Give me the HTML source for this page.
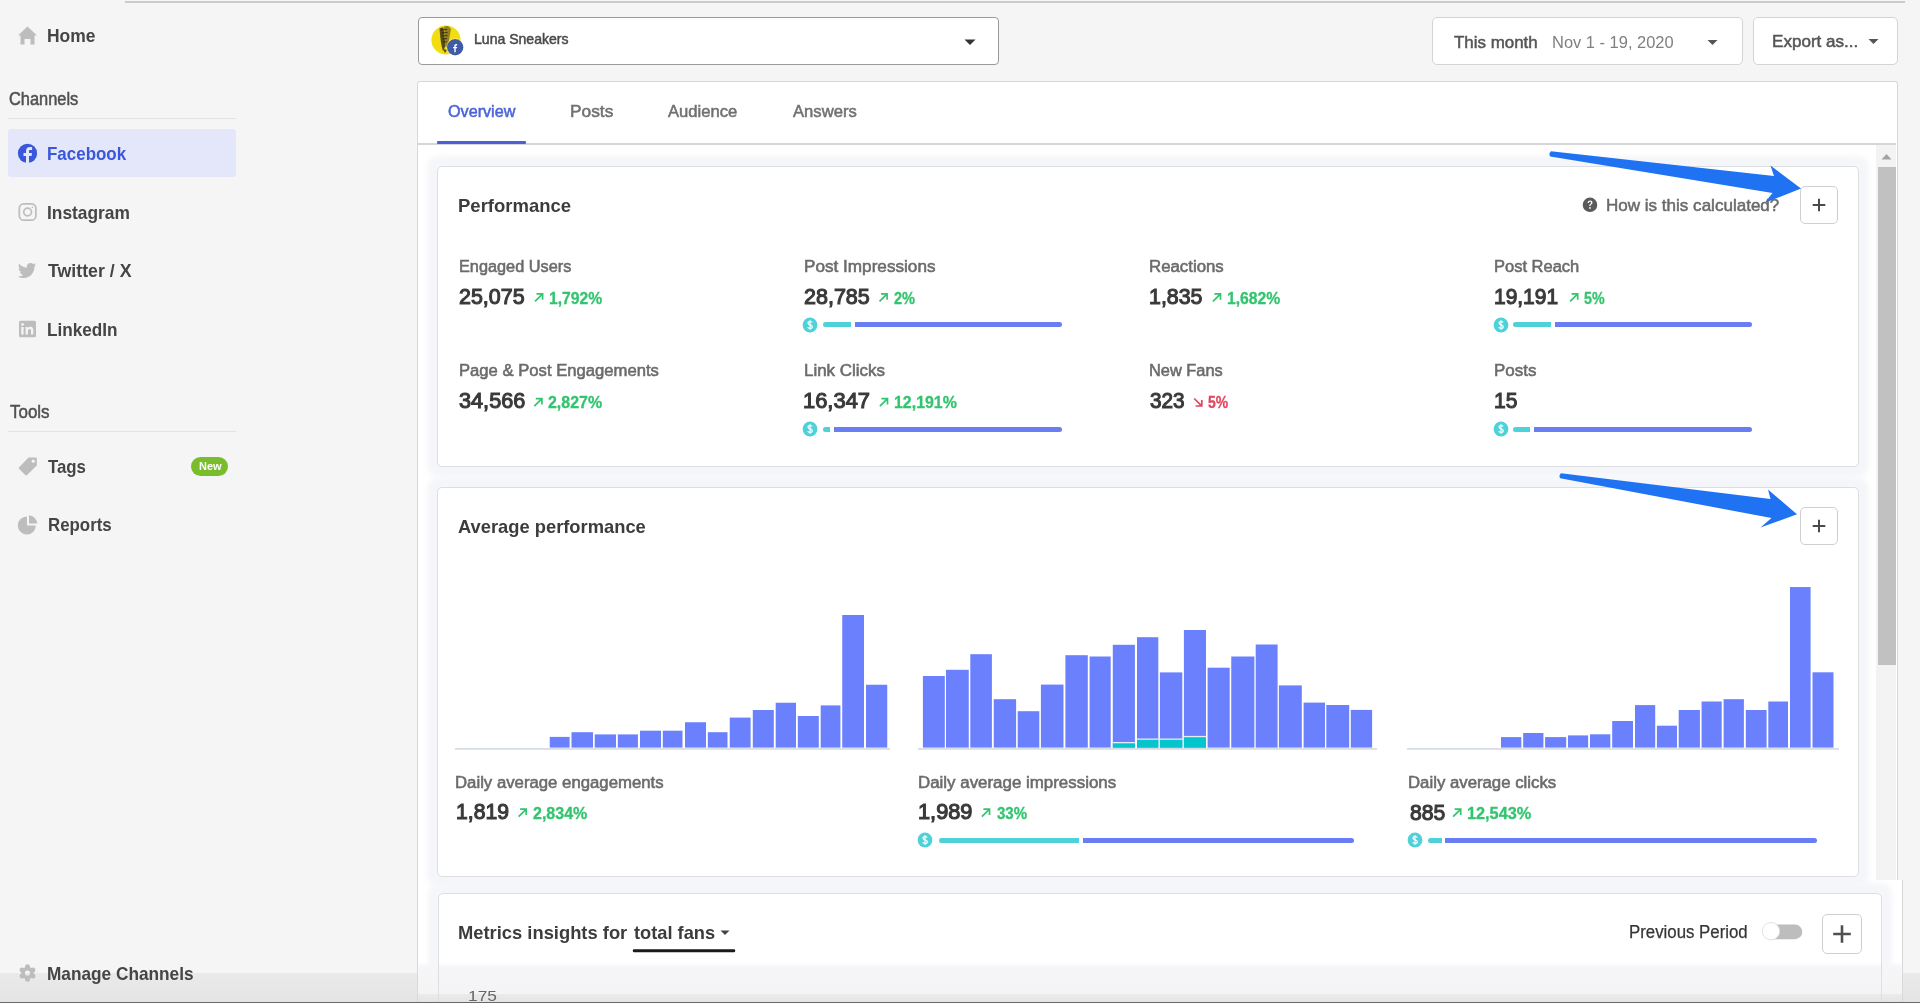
<!DOCTYPE html>
<html><head><meta charset="utf-8"><style>
*{margin:0;padding:0;box-sizing:border-box}
html,body{width:1920px;height:1003px;overflow:hidden;background:#f5f5f5;font-family:"Liberation Sans", sans-serif}
.t{position:absolute;white-space:nowrap;line-height:1;transform-origin:0 0}
.a{position:absolute}
</style></head><body>
<div style="position:absolute;left:0;top:0;width:1920px;height:1003px;filter:blur(0.45px)"><div class="a" style="left:0;top:972.7px;width:1920px;height:30px;background:linear-gradient(to bottom,#eaeaea,#e4e4e4)"></div>
<div class="a" style="left:125px;top:1px;width:1780px;height:2px;background:#cbcbcb"></div>
<div class="a" style="left:8px;top:118px;width:228px;height:1px;background:#e2e2e2"></div>
<div class="a" style="left:8px;top:431px;width:228px;height:1px;background:#e2e2e2"></div>
<div class="a" style="left:8px;top:129px;width:228px;height:48px;background:#e4e7f9;border-radius:3px"></div>
<div class="a" style="left:191px;top:457px;width:37px;height:19px;background:#79bd2c;border-radius:10px"></div>
<svg class="a" style="left:0;top:0" width="240" height="1003" viewBox="0 0 240 1003">
 <path d="M27.5 26.5 L37 35.5 L34.5 35.5 L34.5 44.5 L30.5 44.5 L30.5 39 L24.5 39 L24.5 44.5 L20.5 44.5 L20.5 35.5 L18 35.5 Z" fill="#bdbdbd"/>
 <circle cx="27.5" cy="153.4" r="9.6" fill="#3a56da"/>
 <path d="M29 163 L29 156 L31.6 156 L32 153 L29 153 L29 151.3 C29 150.4 29.3 149.9 30.5 149.9 L32.1 149.9 L32.1 147.2 C31.6 147.1 30.8 147 29.9 147 C27.6 147 26 148.4 26 151 L26 153 L23.5 153 L23.5 156 L26 156 L26 163 Z" fill="#e4e7f9"/>
 <rect x="19.3" y="203.8" width="16.6" height="16.4" rx="4.5" fill="none" stroke="#bdbdbd" stroke-width="1.7"/>
 <circle cx="27.6" cy="212" r="3.9" fill="none" stroke="#bdbdbd" stroke-width="1.7"/>
 <circle cx="32.4" cy="207.3" r="0.9" fill="#bdbdbd"/>
 <path transform="translate(0,1.6)" d="M36.2 263.2 C35.5 263.5 34.8 263.7 34.1 263.8 C34.9 263.3 35.5 262.6 35.7 261.7 C35 262.1 34.2 262.4 33.4 262.6 C32.7 261.8 31.7 261.4 30.6 261.4 C28.5 261.4 26.8 263.1 26.8 265.2 C26.8 265.5 26.8 265.8 26.9 266.1 C23.8 265.9 21 264.4 19.1 262.1 C18.8 262.7 18.6 263.3 18.6 264 C18.6 265.3 19.3 266.5 20.3 267.2 C19.7 267.2 19.1 267 18.6 266.7 C18.6 268.6 19.9 270.1 21.7 270.5 C21.1 270.7 20.4 270.7 19.9 270.6 C20.4 272.1 21.8 273.2 23.4 273.2 C22.1 274.2 20.5 274.8 18.7 274.8 C18.4 274.8 18.1 274.8 17.8 274.8 C19.5 275.9 21.5 276.5 23.6 276.5 C30.6 276.5 34.4 270.7 34.4 265.7 L34.4 265.2 C35.1 264.6 35.7 264 36.2 263.2 Z" fill="#bdbdbd"/>
 <rect x="19" y="320.8" width="17" height="16.4" rx="1.5" fill="#bdbdbd"/>
 <rect x="21.3" y="327" width="2.3" height="7.6" fill="#f5f5f5"/>
 <circle cx="22.45" cy="324.4" r="1.35" fill="#f5f5f5"/>
 <path d="M25.6 327 L27.8 327 L27.8 328.2 C28.3 327.4 29.1 326.8 30.4 326.8 C32.6 326.8 33.3 328.1 33.3 330.2 L33.3 334.6 L31 334.6 L31 330.8 C31 329.7 30.8 328.9 29.7 328.9 C28.5 328.9 27.9 329.6 27.9 330.9 L27.9 334.6 L25.6 334.6 Z" fill="#f5f5f5"/>
 <path d="M28.5 457.5 L35.8 457.5 C36.4 457.5 36.8 457.9 36.8 458.5 L36.8 465.5 L27 475 C26.5 475.5 25.8 475.5 25.3 475 L19.2 469 C18.7 468.5 18.7 467.8 19.2 467.3 Z" fill="#bdbdbd"/>
 <circle cx="33.2" cy="461.2" r="1.6" fill="#f5f5f5"/>
 <path d="M27 516.5 L27 525.5 L35.8 525.5 A9 9 0 1 1 27 516.5 Z" fill="#bdbdbd"/>
 <path d="M29 515.3 A9 9 0 0 1 37.3 523.6 L29 523.6 Z" fill="#bdbdbd"/>
 <mask id="gm"><rect x="-12" y="-12" width="24" height="24" fill="black"/><circle cx="0" cy="0" r="6.2" fill="white"/><circle cx="0.00" cy="-6.20" r="2.5" fill="white"/><circle cx="5.37" cy="-3.10" r="2.5" fill="white"/><circle cx="5.37" cy="3.10" r="2.5" fill="white"/><circle cx="0.00" cy="6.20" r="2.5" fill="white"/><circle cx="-5.37" cy="3.10" r="2.5" fill="white"/><circle cx="-5.37" cy="-3.10" r="2.5" fill="white"/><circle cx="0" cy="0" r="2.6" fill="black"/></mask>
 <g transform="translate(27.5,973)"><rect x="-12" y="-12" width="24" height="24" fill="#bdbdbd" mask="url(#gm)"/></g>
</svg>
<div class="a" style="left:418px;top:17px;width:581px;height:48px;background:#fff;border:1.5px solid #9a9a9a;border-radius:4px"></div>
<svg class="a" style="left:428px;top:22px" width="40" height="40" viewBox="0 0 40 40">
 <circle cx="18" cy="18" r="14.6" fill="#f2de10"/>
 <path d="M11.5 6.5 Q13.5 5 15.5 5.5 L17.5 24 L15 29 Q12.5 22 11.5 6.5 Z" fill="#3d3520" opacity="0.85"/>
 <path d="M16 4.5 L20 4 L23 7 L19.5 26 L17.5 24 Z" fill="#8a7420" opacity="0.9"/>
 <path d="M13 8 L19 7.5 M13.5 11 L19.5 10.5 M14 14 L19.5 13.5 M14.5 17 L19 16.5 M15 20 L18.5 19.8" stroke="#1e1a10" stroke-width="1.1" opacity="0.75"/>
 <path d="M15 27 L17 31 L19 28 Z" fill="#2a2a20" opacity="0.8"/>
 <circle cx="27.2" cy="25.2" r="8.2" fill="#3f5aa6"/>
 <circle cx="27.2" cy="25.2" r="8.6" fill="none" stroke="#fff" stroke-width="0.6" opacity="0.6"/>
 <path d="M27.7 30.2 L27.7 26.3 L29 26.3 L29.2 24.9 L27.7 24.9 L27.7 24 C27.7 23.6 27.9 23.4 28.4 23.4 L29.2 23.4 L29.2 22.1 C29 22.1 28.6 22 28.1 22 C27 22 26.3 22.7 26.3 23.9 L26.3 24.9 L25.1 24.9 L25.1 26.3 L26.3 26.3 L26.3 30.2 Z" fill="#fff"/>
</svg>
<svg class="a" style="left:963px;top:38px" width="14" height="8"><path d="M1.5 1.5 L12.5 1.5 L7 7 Z" fill="#333"/></svg>
<div class="a" style="left:1432px;top:17px;width:311px;height:48px;background:#fff;border:1.5px solid #d3d3d3;border-radius:5px"></div>
<svg class="a" style="left:1706px;top:39px" width="14" height="8"><path d="M1.5 1 L11.5 1 L6.5 6 Z" fill="#555"/></svg>
<div class="a" style="left:1753px;top:17px;width:145px;height:48px;background:#fff;border:1.5px solid #d3d3d3;border-radius:5px"></div>
<svg class="a" style="left:1867px;top:38px" width="14" height="8"><path d="M1.5 1 L11.5 1 L6.5 6 Z" fill="#555"/></svg>
<div class="a" style="left:416.5px;top:80.5px;width:1481px;height:800px;background:#fff;border:1.5px solid #d8d8d8;border-bottom:none;border-radius:3px 3px 0 0"></div>
<div class="a" style="left:417px;top:880px;width:1486px;height:130px;background:#fff;border-left:1.5px solid #d8d8d8;border-right:1.5px solid #d8d8d8"></div>
<div class="a" style="left:418px;top:143.3px;width:1478px;height:1.6px;background:#d6d6d6"></div>
<div class="a" style="left:437px;top:140.5px;width:89px;height:3.3px;background:#4a5fd9;border-radius:1px"></div>
<div class="a" style="left:1876px;top:145px;width:20px;height:735px;background:#f3f3f3"></div>
<svg class="a" style="left:1876px;top:150px" width="20" height="14"><path d="M5.5 9.5 L10.5 4 L15.5 9.5 Z" fill="#a3a3a3"/></svg>
<div class="a" style="left:1877.5px;top:166.7px;width:18px;height:498.3px;background:#c1c1c1"></div>
<div class="a" style="left:427.3px;top:155.5px;width:1441.7px;height:321.0px;background:#f5f6f9;border-radius:12px;filter:blur(2.5px)"></div>
<div class="a" style="left:437.3px;top:165.5px;width:1421.7px;height:301.0px;background:#fff;border:1.4px solid #dcdee2;border-radius:5px"></div>
<div class="a" style="left:427.3px;top:477px;width:1441.7px;height:410px;background:#f5f6f9;border-radius:12px;filter:blur(2.5px)"></div>
<div class="a" style="left:437.3px;top:487px;width:1421.7px;height:390px;background:#fff;border:1.4px solid #dcdee2;border-radius:5px"></div>
<div class="a" style="left:427.5px;top:883px;width:1464.5px;height:167px;background:#f5f6f9;border-radius:12px;filter:blur(2.5px)"></div>
<div class="a" style="left:437.5px;top:893px;width:1444.5px;height:147px;background:#fff;border:1.4px solid #dcdee2;border-radius:5px"></div>
<div class="a" style="left:417px;top:962px;width:1486px;height:31.5px;background:linear-gradient(to bottom,rgba(246,246,248,0) 0px,#f6f6f8 5px,#f4f4f5 100%)"></div>
<div class="a" style="left:417px;top:993.5px;width:1486px;height:9px;background:linear-gradient(to bottom,#ebebeb,#e3e3e3)"></div>
<div class="a" style="left:416.5px;top:955px;width:1.5px;height:48px;background:#d8d8d8"></div>
<div class="a" style="left:437.5px;top:955px;width:1.4px;height:48px;background:#dcdee2"></div>
<div class="a" style="left:1880.6px;top:955px;width:1.4px;height:48px;background:#dcdee2"></div>
<div class="a" style="left:1901.5px;top:955px;width:1.5px;height:48px;background:#d8d8d8"></div>
<svg class="a" style="left:1580px;top:195px" width="20" height="20"><circle cx="10" cy="9.8" r="7.3" fill="#5a5a5a"/>
 <path d="M7.6 7.9 C7.6 6.4 8.6 5.5 10.1 5.5 C11.5 5.5 12.5 6.4 12.5 7.6 C12.5 8.6 11.9 9.1 11.2 9.6 C10.7 10 10.6 10.3 10.6 11 L9.3 11 C9.3 10 9.5 9.5 10.2 9 C10.8 8.5 11.1 8.2 11.1 7.6 C11.1 7.1 10.7 6.7 10.1 6.7 C9.4 6.7 9 7.2 9 7.9 Z" fill="#fff"/>
 <circle cx="9.95" cy="12.9" r="0.9" fill="#fff"/></svg>
<div class="a" style="left:1800.3px;top:185.8px;width:37.700000000000045px;height:38.69999999999999px;background:#fff;border:1.2px solid #cfcfcf;border-radius:5px"></div>
<svg class="a" style="left:1804.15px;top:190.15px" width="30" height="30"><path d="M8.7 15 L21.3 15 M15 8.7 L15 21.3" stroke="#4a4a4a" stroke-width="2"/></svg>
<div class="a" style="left:1800.3px;top:507.3px;width:37.700000000000045px;height:38.19999999999999px;background:#fff;border:1.2px solid #cfcfcf;border-radius:5px"></div>
<svg class="a" style="left:1804.15px;top:511.4px" width="30" height="30"><path d="M8.7 15 L21.3 15 M15 8.7 L15 21.3" stroke="#4a4a4a" stroke-width="2"/></svg>
<div class="a" style="left:1821.6px;top:913.5px;width:40.40000000000009px;height:40.0px;background:#fff;border:1.2px solid #cfcfcf;border-radius:5px"></div>
<svg class="a" style="left:1826.8px;top:918.5px" width="30" height="30"><path d="M6.199999999999999 15 L23.8 15 M15 6.199999999999999 L15 23.8" stroke="#505050" stroke-width="2.6"/></svg>
<svg class="a" style="left:801.3px;top:315.6px" width="18" height="18"><circle cx="9" cy="9" r="7.4" fill="#4fd1d9"/>
<path d="M11.2 6.6 C10.9 5.9 10.2 5.5 9.1 5.5 C7.8 5.5 7 6.2 7 7.1 C7 9.4 11.3 8.3 11.3 10.7 C11.3 11.7 10.4 12.5 9 12.5 C7.8 12.5 7 12 6.7 11.1 M9 4.2 L9 13.8" stroke="#fff" stroke-width="1.2" fill="none"/></svg>
<div class="a" style="left:822.7px;top:322.0px;width:28.399999999999977px;height:5.2px;background:#4fd1d9;border-radius:2.6px 0 0 2.6px"></div>
<div class="a" style="left:854.8px;top:322.0px;width:207.20000000000005px;height:5.2px;background:#6a7ef4;border-radius:0 2.6px 2.6px 0"></div>
<svg class="a" style="left:1492px;top:315.6px" width="18" height="18"><circle cx="9" cy="9" r="7.4" fill="#4fd1d9"/>
<path d="M11.2 6.6 C10.9 5.9 10.2 5.5 9.1 5.5 C7.8 5.5 7 6.2 7 7.1 C7 9.4 11.3 8.3 11.3 10.7 C11.3 11.7 10.4 12.5 9 12.5 C7.8 12.5 7 12 6.7 11.1 M9 4.2 L9 13.8" stroke="#fff" stroke-width="1.2" fill="none"/></svg>
<div class="a" style="left:1513.4px;top:322.0px;width:37.59999999999991px;height:5.2px;background:#4fd1d9;border-radius:2.6px 0 0 2.6px"></div>
<div class="a" style="left:1554.9px;top:322.0px;width:197.29999999999995px;height:5.2px;background:#6a7ef4;border-radius:0 2.6px 2.6px 0"></div>
<svg class="a" style="left:801.3px;top:420.3px" width="18" height="18"><circle cx="9" cy="9" r="7.4" fill="#4fd1d9"/>
<path d="M11.2 6.6 C10.9 5.9 10.2 5.5 9.1 5.5 C7.8 5.5 7 6.2 7 7.1 C7 9.4 11.3 8.3 11.3 10.7 C11.3 11.7 10.4 12.5 9 12.5 C7.8 12.5 7 12 6.7 11.1 M9 4.2 L9 13.8" stroke="#fff" stroke-width="1.2" fill="none"/></svg>
<div class="a" style="left:823px;top:426.7px;width:7px;height:5.2px;background:#4fd1d9;border-radius:2.6px 0 0 2.6px"></div>
<div class="a" style="left:833.6px;top:426.7px;width:228.19999999999993px;height:5.2px;background:#6a7ef4;border-radius:0 2.6px 2.6px 0"></div>
<svg class="a" style="left:1492px;top:420.3px" width="18" height="18"><circle cx="9" cy="9" r="7.4" fill="#4fd1d9"/>
<path d="M11.2 6.6 C10.9 5.9 10.2 5.5 9.1 5.5 C7.8 5.5 7 6.2 7 7.1 C7 9.4 11.3 8.3 11.3 10.7 C11.3 11.7 10.4 12.5 9 12.5 C7.8 12.5 7 12 6.7 11.1 M9 4.2 L9 13.8" stroke="#fff" stroke-width="1.2" fill="none"/></svg>
<div class="a" style="left:1513.4px;top:426.7px;width:16.199999999999818px;height:5.2px;background:#4fd1d9;border-radius:2.6px 0 0 2.6px"></div>
<div class="a" style="left:1533.5px;top:426.7px;width:218.70000000000005px;height:5.2px;background:#6a7ef4;border-radius:0 2.6px 2.6px 0"></div>
<svg class="a" style="left:916.3px;top:831.1px" width="18" height="18"><circle cx="9" cy="9" r="7.4" fill="#4fd1d9"/>
<path d="M11.2 6.6 C10.9 5.9 10.2 5.5 9.1 5.5 C7.8 5.5 7 6.2 7 7.1 C7 9.4 11.3 8.3 11.3 10.7 C11.3 11.7 10.4 12.5 9 12.5 C7.8 12.5 7 12 6.7 11.1 M9 4.2 L9 13.8" stroke="#fff" stroke-width="1.2" fill="none"/></svg>
<div class="a" style="left:938.5px;top:837.5px;width:140.0999999999999px;height:5.2px;background:#4fd1d9;border-radius:2.6px 0 0 2.6px"></div>
<div class="a" style="left:1082.8px;top:837.5px;width:271.60000000000014px;height:5.2px;background:#6a7ef4;border-radius:0 2.6px 2.6px 0"></div>
<svg class="a" style="left:1405.8px;top:831.1px" width="18" height="18"><circle cx="9" cy="9" r="7.4" fill="#4fd1d9"/>
<path d="M11.2 6.6 C10.9 5.9 10.2 5.5 9.1 5.5 C7.8 5.5 7 6.2 7 7.1 C7 9.4 11.3 8.3 11.3 10.7 C11.3 11.7 10.4 12.5 9 12.5 C7.8 12.5 7 12 6.7 11.1 M9 4.2 L9 13.8" stroke="#fff" stroke-width="1.2" fill="none"/></svg>
<div class="a" style="left:1427.8px;top:837.5px;width:14.299999999999955px;height:5.2px;background:#4fd1d9;border-radius:2.6px 0 0 2.6px"></div>
<div class="a" style="left:1445.4px;top:837.5px;width:372.0999999999999px;height:5.2px;background:#6a7ef4;border-radius:0 2.6px 2.6px 0"></div>
<svg class="a" style="left:0;top:0" width="1920" height="1003">
<path d="M534.9999999999999 301.40000000000003 L542.3999999999999 294.1 M536.4999999999999 293.90000000000003 L542.5999999999999 293.90000000000003 L542.5999999999999 299.80000000000007" stroke="#33c46f" stroke-width="1.7" fill="none"/>
<path d="M879.4999999999999 301.40000000000003 L886.8999999999999 294.1 M880.9999999999999 293.90000000000003 L887.0999999999999 293.90000000000003 L887.0999999999999 299.80000000000007" stroke="#33c46f" stroke-width="1.7" fill="none"/>
<path d="M1212.8999999999999 301.40000000000003 L1220.3 294.1 M1214.3999999999999 293.90000000000003 L1220.5 293.90000000000003 L1220.5 299.80000000000007" stroke="#33c46f" stroke-width="1.7" fill="none"/>
<path d="M1570.1 301.40000000000003 L1577.5 294.1 M1571.6 293.90000000000003 L1577.7 293.90000000000003 L1577.7 299.80000000000007" stroke="#33c46f" stroke-width="1.7" fill="none"/>
<path d="M534.3 406.20000000000005 L541.6999999999999 398.90000000000003 M535.8 398.70000000000005 L541.9 398.70000000000005 L541.9 404.6000000000001" stroke="#33c46f" stroke-width="1.7" fill="none"/>
<path d="M879.8999999999999 406.20000000000005 L887.2999999999998 398.90000000000003 M881.3999999999999 398.70000000000005 L887.4999999999999 398.70000000000005 L887.4999999999999 404.6000000000001" stroke="#33c46f" stroke-width="1.7" fill="none"/>
<path d="M1194.1999999999998 398.50000000000006 L1201.6 405.80000000000007 M1195.6999999999998 406.00000000000006 L1201.8 406.00000000000006 L1201.8 400.1" stroke="#e0455e" stroke-width="1.7" fill="none"/>
<path d="M518.5999999999999 816.7 L525.9999999999999 809.4000000000001 M520.0999999999999 809.2 L526.1999999999999 809.2 L526.1999999999999 815.1" stroke="#33c46f" stroke-width="1.7" fill="none"/>
<path d="M981.8999999999999 816.7 L989.2999999999998 809.4000000000001 M983.3999999999999 809.2 L989.4999999999999 809.2 L989.4999999999999 815.1" stroke="#33c46f" stroke-width="1.7" fill="none"/>
<path d="M1453.1 816.7 L1460.5 809.4000000000001 M1454.6 809.2 L1460.7 809.2 L1460.7 815.1" stroke="#33c46f" stroke-width="1.7" fill="none"/>
<rect x="455" y="748" width="435" height="1.8" fill="#d7dde5"/>
<rect x="918" y="748" width="459" height="1.8" fill="#d7dde5"/>
<rect x="1407" y="748" width="432" height="1.8" fill="#d7dde5"/>
<rect x="549.75" y="736.9" width="19.850000000000023" height="10.700000000000045" fill="#6a80fd"/>
<rect x="571.5" y="732.2" width="21.5" height="15.399999999999977" fill="#6a80fd"/>
<rect x="594.75" y="734.4" width="21.25" height="13.200000000000045" fill="#6a80fd"/>
<rect x="617.8" y="734.4" width="20.100000000000023" height="13.200000000000045" fill="#6a80fd"/>
<rect x="640" y="730.7" width="21" height="16.899999999999977" fill="#6a80fd"/>
<rect x="662.8" y="730.7" width="19.700000000000045" height="16.899999999999977" fill="#6a80fd"/>
<rect x="685" y="722.25" width="21" height="25.350000000000023" fill="#6a80fd"/>
<rect x="707.8" y="732.2" width="19.700000000000045" height="15.399999999999977" fill="#6a80fd"/>
<rect x="729.75" y="717.6" width="20.850000000000023" height="30.0" fill="#6a80fd"/>
<rect x="752.8" y="710" width="21.0" height="37.60000000000002" fill="#6a80fd"/>
<rect x="775.7" y="702.75" width="20.299999999999955" height="44.85000000000002" fill="#6a80fd"/>
<rect x="797.8" y="716" width="21.0" height="31.600000000000023" fill="#6a80fd"/>
<rect x="820.7" y="705.4" width="19.699999999999932" height="42.200000000000045" fill="#6a80fd"/>
<rect x="842.25" y="615" width="21.75" height="132.60000000000002" fill="#6a80fd"/>
<rect x="866" y="684.75" width="21.25" height="62.85000000000002" fill="#6a80fd"/>
<rect x="922.9" y="676" width="21.899999999999977" height="71.60000000000002" fill="#6a80fd"/>
<rect x="946" y="669.8" width="22.75" height="77.80000000000007" fill="#6a80fd"/>
<rect x="970.3" y="654.2" width="21.600000000000023" height="93.39999999999998" fill="#6a80fd"/>
<rect x="993.75" y="699.2" width="22.350000000000023" height="48.39999999999998" fill="#6a80fd"/>
<rect x="1017.7" y="711.2" width="21.59999999999991" height="36.39999999999998" fill="#6a80fd"/>
<rect x="1040.9" y="684.6" width="22.59999999999991" height="63.0" fill="#6a80fd"/>
<rect x="1065.4" y="655.2" width="22.399999999999864" height="92.39999999999998" fill="#6a80fd"/>
<rect x="1089.6" y="656.5" width="21.100000000000136" height="91.10000000000002" fill="#6a80fd"/>
<rect x="1112.8" y="644.8" width="22.100000000000136" height="102.80000000000007" fill="#6a80fd"/>
<rect x="1137" y="637.2" width="21.299999999999955" height="110.39999999999998" fill="#6a80fd"/>
<rect x="1159.9" y="672.4" width="22.399999999999864" height="75.20000000000005" fill="#6a80fd"/>
<rect x="1183.9" y="630" width="22.09999999999991" height="117.60000000000002" fill="#6a80fd"/>
<rect x="1207.6" y="667.7" width="22.100000000000136" height="79.89999999999998" fill="#6a80fd"/>
<rect x="1231.25" y="656.5" width="23.15000000000009" height="91.10000000000002" fill="#6a80fd"/>
<rect x="1255.7" y="644.5" width="21.899999999999864" height="103.10000000000002" fill="#6a80fd"/>
<rect x="1278.9" y="685.4" width="22.899999999999864" height="62.200000000000045" fill="#6a80fd"/>
<rect x="1303.6" y="702.6" width="21.40000000000009" height="45.0" fill="#6a80fd"/>
<rect x="1326.3" y="705" width="22.90000000000009" height="42.60000000000002" fill="#6a80fd"/>
<rect x="1350.8" y="709.9" width="21.299999999999955" height="37.700000000000045" fill="#6a80fd"/>
<rect x="1501" y="737.1" width="20.299999999999955" height="10.5" fill="#6a80fd"/>
<rect x="1523.2" y="733" width="20.200000000000045" height="14.600000000000023" fill="#6a80fd"/>
<rect x="1545.1" y="737.1" width="21.100000000000136" height="10.5" fill="#6a80fd"/>
<rect x="1568" y="735.4" width="20.09999999999991" height="12.200000000000045" fill="#6a80fd"/>
<rect x="1590" y="734.3" width="20.299999999999955" height="13.300000000000068" fill="#6a80fd"/>
<rect x="1612.2" y="721" width="20.799999999999955" height="26.600000000000023" fill="#6a80fd"/>
<rect x="1635" y="705.1" width="20.200000000000045" height="42.5" fill="#6a80fd"/>
<rect x="1656.9" y="725.7" width="20.09999999999991" height="21.899999999999977" fill="#6a80fd"/>
<rect x="1678.7" y="710" width="21.200000000000045" height="37.60000000000002" fill="#6a80fd"/>
<rect x="1701.6" y="701.5" width="20.100000000000136" height="46.10000000000002" fill="#6a80fd"/>
<rect x="1723.6" y="699.2" width="20.300000000000182" height="48.39999999999998" fill="#6a80fd"/>
<rect x="1745.8" y="710" width="20.799999999999955" height="37.60000000000002" fill="#6a80fd"/>
<rect x="1768.3" y="701.5" width="19.700000000000045" height="46.10000000000002" fill="#6a80fd"/>
<rect x="1790" y="587.05" width="20.59999999999991" height="160.55000000000007" fill="#6a80fd"/>
<rect x="1812.5" y="672.3" width="21.0" height="75.30000000000007" fill="#6a80fd"/>
<rect x="1112.8" y="743.3" width="22.100000000000136" height="4.300000000000068" fill="#05c5cc"/>
<rect x="1112.8" y="742.0" width="22.100000000000136" height="1.3" fill="#e6ecff"/>
<rect x="1137" y="739.8" width="21.299999999999955" height="7.800000000000068" fill="#05c5cc"/>
<rect x="1137" y="738.5" width="21.299999999999955" height="1.3" fill="#e6ecff"/>
<rect x="1159.9" y="739.8" width="22.399999999999864" height="7.800000000000068" fill="#05c5cc"/>
<rect x="1159.9" y="738.5" width="22.399999999999864" height="1.3" fill="#e6ecff"/>
<rect x="1183.9" y="737.2" width="22.09999999999991" height="10.399999999999977" fill="#05c5cc"/>
<rect x="1183.9" y="735.9000000000001" width="22.09999999999991" height="1.3" fill="#e6ecff"/>
<path d="M1551 151.3 L1774 176 L1770.5 165.5 L1801 188.5 L1764.5 203 L1772.5 193 L1550.3 156.6 Q1548.2 154 1551 151.3 Z" fill="#1f72f2"/>
<path d="M1561 473.2 L1770.5 499 L1768 489.5 L1797 514.3 L1760.5 527.5 L1771.5 518 L1560.3 478.3 Q1558.3 475.8 1561 473.2 Z" fill="#1f72f2"/>
<rect x="632.8" y="949.2" width="102.4" height="3" rx="1.2" fill="#1a1a1a"/>
<path d="M720.5 930.5 L729.5 930.5 L725 935 Z" fill="#444"/>
<rect x="1762.5" y="924.5" width="39.8" height="14.7" rx="7.35" fill="#bdbdbd"/>
<circle cx="1771" cy="931.2" r="8.7" fill="#fff" stroke="#dadada" stroke-width="0.8"/>
</svg>
<div id="home" class="t" style="left:47.03px;top:27.34px;font-size:18.5px;font-weight:bold;color:#454545;transform:scaleX(0.9431);">Home</div>
<div id="channels" class="t" style="left:8.97px;top:91.19px;font-size:17.5px;font-weight:normal;color:#505050;-webkit-text-stroke:0.5px #505050;transform:scaleX(0.9373);">Channels</div>
<div id="facebook" class="t" style="left:47.04px;top:145.34px;font-size:18.5px;font-weight:bold;color:#3a56da;transform:scaleX(0.9163);">Facebook</div>
<div id="instagram" class="t" style="left:47.03px;top:203.84px;font-size:18.5px;font-weight:bold;color:#454545;transform:scaleX(0.9375);">Instagram</div>
<div id="twitter" class="t" style="left:47.98px;top:262.14px;font-size:18.5px;font-weight:bold;color:#454545;transform:scaleX(0.9602);">Twitter / X</div>
<div id="linkedin" class="t" style="left:47.04px;top:320.54px;font-size:18.5px;font-weight:bold;color:#454545;transform:scaleX(0.9267);">LinkedIn</div>
<div id="tools" class="t" style="left:9.58px;top:403.99px;font-size:17.5px;font-weight:normal;color:#505050;-webkit-text-stroke:0.5px #505050;transform:scaleX(0.9690);">Tools</div>
<div id="tags" class="t" style="left:47.81px;top:457.74px;font-size:18.5px;font-weight:bold;color:#454545;transform:scaleX(0.9071);">Tags</div>
<div id="reports" class="t" style="left:47.81px;top:515.74px;font-size:18.5px;font-weight:bold;color:#454545;transform:scaleX(0.9114);">Reports</div>
<div id="manage" class="t" style="left:47.03px;top:964.84px;font-size:18.5px;font-weight:bold;color:#454545;transform:scaleX(0.9318);">Manage Channels</div>
<div id="newb" class="t" style="left:199.00px;top:461.19px;font-size:11px;font-weight:bold;color:#ffffff;">New</div>
<div id="luna" class="t" style="left:473.51px;top:32.33px;font-size:14.5px;font-weight:normal;color:#4a4a4a;-webkit-text-stroke:0.5px #4a4a4a;transform:scaleX(0.9694);">Luna Sneakers</div>
<div id="thismonth" class="t" style="left:1454.00px;top:33.81px;font-size:17px;font-weight:normal;color:#555555;-webkit-text-stroke:0.5px #555555;transform:scaleX(0.9953);">This month</div>
<div id="daterange" class="t" style="left:1552.03px;top:33.81px;font-size:17px;font-weight:normal;color:#808080;transform:scaleX(0.9680);">Nov 1 - 19, 2020</div>
<div id="export" class="t" style="left:1771.80px;top:33.41px;font-size:17px;font-weight:normal;color:#555555;-webkit-text-stroke:0.5px #555555;transform:scaleX(1.0035);">Export as...</div>
<div id="tab1" class="t" style="left:447.60px;top:103.86px;font-size:16px;font-weight:normal;color:#4a63d9;-webkit-text-stroke:0.5px #4a63d9;transform:scaleX(1.0103);">Overview</div>
<div id="tab2" class="t" style="left:570.00px;top:103.86px;font-size:16px;font-weight:normal;color:#707070;-webkit-text-stroke:0.5px #707070;transform:scaleX(1.0825);">Posts</div>
<div id="tab3" class="t" style="left:668.43px;top:103.86px;font-size:16px;font-weight:normal;color:#707070;-webkit-text-stroke:0.5px #707070;transform:scaleX(1.0382);">Audience</div>
<div id="tab4" class="t" style="left:792.61px;top:103.86px;font-size:16px;font-weight:normal;color:#707070;-webkit-text-stroke:0.5px #707070;transform:scaleX(1.0387);">Answers</div>
<div id="perf" class="t" style="left:458.01px;top:195.52px;font-size:19px;font-weight:bold;color:#3c3c3c;transform:scaleX(0.9741);">Performance</div>
<div id="howcalc" class="t" style="left:1605.60px;top:197.21px;font-size:17px;font-weight:normal;color:#6a6a6a;-webkit-text-stroke:0.5px #6a6a6a;transform:scaleX(1.0023);">How is this calculated?</div>
<div id="ml0" class="t" style="left:458.61px;top:258.86px;font-size:16px;font-weight:normal;color:#6b6b6b;-webkit-text-stroke:0.55px #6b6b6b;transform:scaleX(1.0180);">Engaged Users</div>
<div id="mv0" class="t" style="left:458.59px;top:285.58px;font-size:22px;font-weight:normal;color:#3a3a3a;-webkit-text-stroke:1.1px #3a3a3a;transform:scaleX(0.9750);">25,075</div>
<div id="mp0" class="t" style="left:548.80px;top:290.66px;font-size:16px;font-weight:bold;color:#33c46f;-webkit-text-stroke:0.3px #33c46f;transform:scaleX(0.9782);">1,792%</div>
<div id="ml1" class="t" style="left:803.62px;top:258.86px;font-size:16px;font-weight:normal;color:#6b6b6b;-webkit-text-stroke:0.55px #6b6b6b;transform:scaleX(1.0715);">Post Impressions</div>
<div id="mv1" class="t" style="left:803.59px;top:285.58px;font-size:22px;font-weight:normal;color:#3a3a3a;-webkit-text-stroke:1.1px #3a3a3a;transform:scaleX(0.9779);">28,785</div>
<div id="mp1" class="t" style="left:893.76px;top:290.66px;font-size:16px;font-weight:bold;color:#33c46f;-webkit-text-stroke:0.3px #33c46f;transform:scaleX(0.9125);">2%</div>
<div id="ml2" class="t" style="left:1148.59px;top:258.86px;font-size:16px;font-weight:normal;color:#6b6b6b;-webkit-text-stroke:0.55px #6b6b6b;transform:scaleX(1.0507);">Reactions</div>
<div id="mv2" class="t" style="left:1148.61px;top:285.58px;font-size:22px;font-weight:normal;color:#3a3a3a;-webkit-text-stroke:1.1px #3a3a3a;transform:scaleX(0.9709);">1,835</div>
<div id="mp2" class="t" style="left:1226.60px;top:290.66px;font-size:16px;font-weight:bold;color:#33c46f;-webkit-text-stroke:0.3px #33c46f;transform:scaleX(0.9800);">1,682%</div>
<div id="ml3" class="t" style="left:1494.00px;top:258.86px;font-size:16px;font-weight:normal;color:#6b6b6b;-webkit-text-stroke:0.55px #6b6b6b;transform:scaleX(1.0313);">Post Reach</div>
<div id="mv3" class="t" style="left:1494.00px;top:285.58px;font-size:22px;font-weight:normal;color:#3a3a3a;-webkit-text-stroke:1.1px #3a3a3a;transform:scaleX(0.9515);">19,191</div>
<div id="mp3" class="t" style="left:1584.00px;top:290.66px;font-size:16px;font-weight:bold;color:#33c46f;-webkit-text-stroke:0.3px #33c46f;transform:scaleX(0.8917);">5%</div>
<div id="ml4" class="t" style="left:458.61px;top:363.46px;font-size:16px;font-weight:normal;color:#6b6b6b;-webkit-text-stroke:0.55px #6b6b6b;transform:scaleX(1.0404);">Page &amp; Post Engagements</div>
<div id="mv4" class="t" style="left:458.60px;top:390.18px;font-size:22px;font-weight:normal;color:#3a3a3a;-webkit-text-stroke:1.1px #3a3a3a;transform:scaleX(0.9853);">34,566</div>
<div id="mp4" class="t" style="left:548.40px;top:395.26px;font-size:16px;font-weight:bold;color:#33c46f;-webkit-text-stroke:0.3px #33c46f;transform:scaleX(0.9964);">2,827%</div>
<div id="ml5" class="t" style="left:803.62px;top:363.46px;font-size:16px;font-weight:normal;color:#6b6b6b;-webkit-text-stroke:0.55px #6b6b6b;transform:scaleX(1.0584);">Link Clicks</div>
<div id="mv5" class="t" style="left:802.60px;top:390.18px;font-size:22px;font-weight:normal;color:#3a3a3a;-webkit-text-stroke:1.1px #3a3a3a;transform:scaleX(0.9955);">16,347</div>
<div id="mp5" class="t" style="left:893.60px;top:395.26px;font-size:16px;font-weight:bold;color:#33c46f;-webkit-text-stroke:0.3px #33c46f;transform:scaleX(0.9953);">12,191%</div>
<div id="ml6" class="t" style="left:1148.60px;top:363.46px;font-size:16px;font-weight:normal;color:#6b6b6b;-webkit-text-stroke:0.55px #6b6b6b;transform:scaleX(1.0236);">New Fans</div>
<div id="mv6" class="t" style="left:1149.56px;top:390.18px;font-size:22px;font-weight:normal;color:#3a3a3a;-webkit-text-stroke:1.1px #3a3a3a;transform:scaleX(0.9447);">323</div>
<div id="mp6" class="t" style="left:1208.19px;top:395.26px;font-size:16px;font-weight:bold;color:#e0455e;-webkit-text-stroke:0.3px #e0455e;transform:scaleX(0.8708);">5%</div>
<div id="ml7" class="t" style="left:1494.00px;top:363.46px;font-size:16px;font-weight:normal;color:#6b6b6b;-webkit-text-stroke:0.55px #6b6b6b;transform:scaleX(1.0600);">Posts</div>
<div id="mv7" class="t" style="left:1494.00px;top:390.18px;font-size:22px;font-weight:normal;color:#3a3a3a;-webkit-text-stroke:1.1px #3a3a3a;transform:scaleX(0.9560);">15</div>
<div id="avg" class="t" style="left:458.39px;top:516.72px;font-size:19px;font-weight:bold;color:#3c3c3c;transform:scaleX(0.9646);">Average performance</div>
<div id="al0" class="t" style="left:455.00px;top:774.66px;font-size:16px;font-weight:normal;color:#6b6b6b;-webkit-text-stroke:0.55px #6b6b6b;transform:scaleX(1.0470);">Daily average engagements</div>
<div id="av0" class="t" style="left:456.00px;top:802.30px;font-size:21.5px;font-weight:normal;color:#3a3a3a;-webkit-text-stroke:1.1px #3a3a3a;transform:scaleX(0.9833);">1,819</div>
<div id="ap0" class="t" style="left:533.00px;top:806.26px;font-size:16px;font-weight:bold;color:#33c46f;-webkit-text-stroke:0.3px #33c46f;transform:scaleX(1.0000);">2,834%</div>
<div id="al1" class="t" style="left:918.41px;top:774.66px;font-size:16px;font-weight:normal;color:#6b6b6b;-webkit-text-stroke:0.55px #6b6b6b;transform:scaleX(1.0559);">Daily average impressions</div>
<div id="av1" class="t" style="left:918.39px;top:802.30px;font-size:21.5px;font-weight:normal;color:#3a3a3a;-webkit-text-stroke:1.1px #3a3a3a;transform:scaleX(1.0113);">1,989</div>
<div id="ap1" class="t" style="left:996.55px;top:806.26px;font-size:16px;font-weight:bold;color:#33c46f;-webkit-text-stroke:0.3px #33c46f;transform:scaleX(0.9394);">33%</div>
<div id="al2" class="t" style="left:1407.59px;top:774.66px;font-size:16px;font-weight:normal;color:#6b6b6b;-webkit-text-stroke:0.55px #6b6b6b;transform:scaleX(1.0479);">Daily average clicks</div>
<div id="av2" class="t" style="left:1409.59px;top:803.30px;font-size:21.5px;font-weight:normal;color:#3a3a3a;-webkit-text-stroke:1.1px #3a3a3a;transform:scaleX(0.9838);">885</div>
<div id="ap2" class="t" style="left:1467.00px;top:806.26px;font-size:16px;font-weight:bold;color:#33c46f;-webkit-text-stroke:0.3px #33c46f;transform:scaleX(1.0172);">12,543%</div>
<div id="mi1" class="t" style="left:457.60px;top:924.34px;font-size:18.5px;font-weight:bold;color:#3c3c3c;transform:scaleX(0.9918);">Metrics insights for</div>
<div id="mi2" class="t" style="left:633.59px;top:924.34px;font-size:18.5px;font-weight:bold;color:#3c3c3c;transform:scaleX(0.9867);">total fans</div>
<div id="prev" class="t" style="left:1629.00px;top:924.39px;font-size:17.5px;font-weight:normal;color:#363636;-webkit-text-stroke:0.25px #363636;transform:scaleX(0.9610);">Previous Period</div>
<div id="y175" class="t" style="left:468.49px;top:988.30px;font-size:15px;font-weight:normal;color:#666666;transform:scaleX(1.1542);">175</div>
<div class="a" style="left:0;top:1001.5px;width:1920px;height:1.5px;background:#686868"></div></div>
</body></html>
